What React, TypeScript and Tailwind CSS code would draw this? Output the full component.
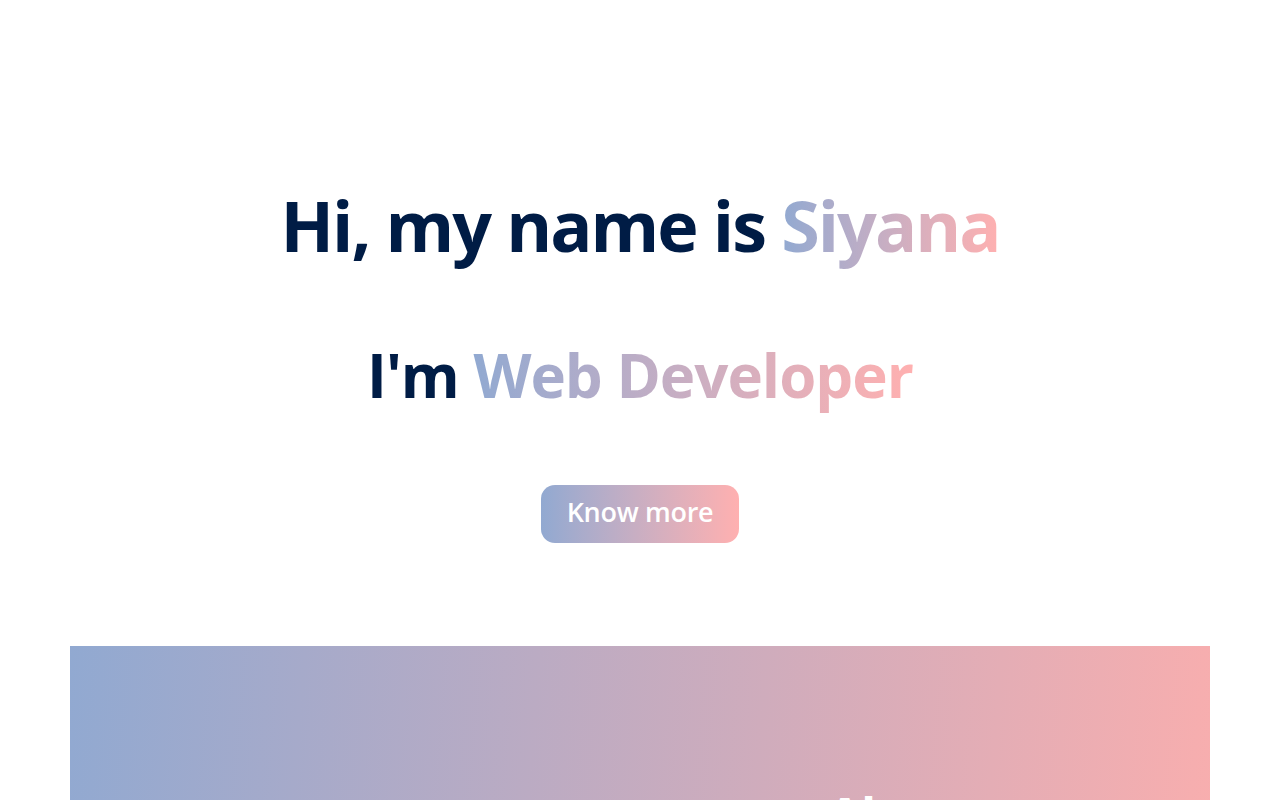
import React from "react"

const gradientText =
  "bg-gradient-to-r from-[#91a9d1] to-[#ffb0b0] bg-clip-text text-transparent"

const Hero: React.FC = () => {
  return (
    <section className="flex flex-col items-center pt-[177px]">
      <h1 className="text-[70px] font-bold leading-[96px] text-[#001c45] tracking-[-2px]">
        Hi, my name is <span className={gradientText}>Siyana</span>
      </h1>
      <h2 className="mt-[62px] text-[60px] font-bold leading-[80px] text-[#001c45] tracking-[-1px]">
        I'm <span className={gradientText}>Web Developer</span>
      </h2>
      <button className="mt-[70px] h-[58px] w-[198px] rounded-[14px] bg-gradient-to-r from-[#91a9d1] to-[#ffb0b0] pb-[4px] text-[27px] font-semibold tracking-[-0.3px] text-white">
        Know more
      </button>
    </section>
  )
}

const About: React.FC = () => {
  return (
    <section className="mx-auto mt-[103px] grid w-[1140px] grid-cols-2 bg-[linear-gradient(95deg,#91a9d1,#f9aeae)] pt-[140px] pb-[120px]">
      <div />
      <h2 className="pl-[40px] text-center text-[48px] font-bold leading-[58px] text-white">About me</h2>
    </section>
  )
}

export default function App() {
  return (
    <div className="min-h-screen bg-white" style={{ fontFamily: '"Open Sans", "Noto Sans", sans-serif' }}>
      <Hero />
      <About />
    </div>
  )
}
